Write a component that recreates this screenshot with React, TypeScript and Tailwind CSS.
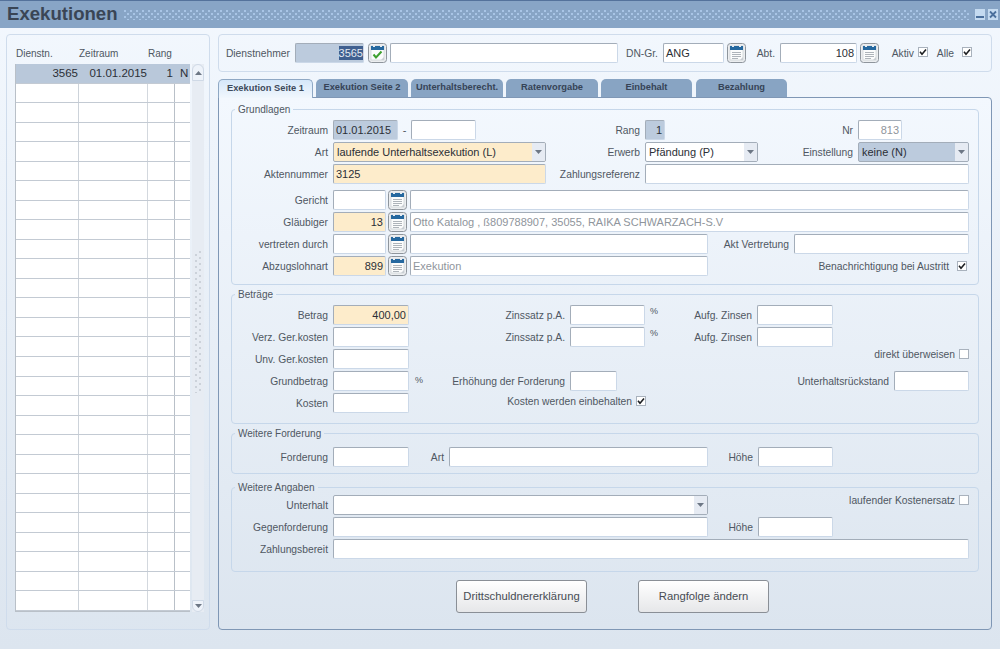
import React from 'react';

const LBL = 'shrink-0 text-right text-[10.3px] leading-none text-[#4f5762] whitespace-nowrap pt-[2px]';
const FIELD =
  'shrink-0 h-[20px] flex items-center border border-t-[#a3adb9] border-l-[#a3adb9] border-r-[#cbd8e8] border-b-[#cbd8e8] rounded-[2px] text-[11px] leading-none text-[#2b2f36] px-[2px] overflow-hidden whitespace-nowrap';
const SECTION = 'border border-[#c6d7ea] rounded-[4px] mx-0 px-0 min-w-0';
const LEGEND = 'ml-[3px] px-[3px] h-[14px] text-[10px] leading-[16px] text-[#4f5762]';

function Lbl({ className, children }: { className: string; children: React.ReactNode }) {
  return <span className={`${LBL} pr-[5px] ${className}`}>{children}</span>;
}

function Field({ className = '', children }: { className?: string; children?: React.ReactNode }) {
  return <div className={`${FIELD} ${className}`}>{children}</div>;
}

function Select({ className = '', children }: { className?: string; children?: React.ReactNode }) {
  return (
    <div className={`${FIELD} !pr-0 !border-[#a3adb9] ${className}`}>
      <span className="flex-1 pl-[1px]">{children}</span>
      <span className="w-[13px] h-full bg-[#e6ebf3] flex items-center justify-center">
        <svg width="7" height="4" viewBox="0 0 7 4">
          <path d="M0 0h7L3.5 4z" fill="#6d7785" />
        </svg>
      </span>
    </div>
  );
}

function Row({ className = '', children }: { className?: string; children: React.ReactNode }) {
  return <div className={`flex items-center h-[20px] ${className}`}>{children}</div>;
}

function Check({ checked = false, className = '' }: { checked?: boolean; className?: string }) {
  return (
    <svg width="10" height="10" viewBox="0 0 10 10" className={`shrink-0 ${className}`}>
      <rect x="0.5" y="0.5" width="9" height="9" fill="#fff" stroke="#a9b2bd" />
      {checked && <path d="M2 4.8 4 7.2 8 2.6" fill="none" stroke="#1d1f22" strokeWidth="1.6" />}
    </svg>
  );
}

function CalIcon({ ok = false, className = '' }: { ok?: boolean; className?: string }) {
  return (
    <svg width="19" height="20" viewBox="0 0 19 20" className={`shrink-0 ${className}`}>
      <rect x="0.5" y="0.5" width="18" height="19" rx="3" fill="#eceef0" stroke="#8e959c" />
      <rect x="3" y="3" width="13" height="14" fill="#fbfcfc" stroke="#c3c8cd" strokeWidth="0.6" />
      <rect x="3" y="3" width="13" height="4" fill="#25689f" />
      <rect x="5" y="2" width="2" height="2" fill="#e8edf2" />
      <rect x="12" y="2" width="2" height="2" fill="#e8edf2" />
      {ok ? (
        <path d="M5.5 11.5 8 14.5 13.5 8.5" fill="none" stroke="#3da02f" strokeWidth="2" />
      ) : (
        <path d="M5 9.5h9M5 11.5h9M5 13.5h9M5 15.5h6" stroke="#aeb4ba" strokeWidth="1" fill="none" />
      )}
      <path d="M13 17l3-3v3z" fill="#c9ced3" />
    </svg>
  );
}

function Dither() {
  return (
    <svg className="flex-1 h-[10px] min-w-0" aria-hidden="true">
      <defs>
        <pattern id="dots" width="6" height="6" patternUnits="userSpaceOnUse">
          <rect x="0" y="0" width="2" height="2" fill="#a9c5e6" />
          <rect x="3" y="3" width="2" height="2" fill="#a9c5e6" />
        </pattern>
      </defs>
      <rect width="100%" height="100%" fill="url(#dots)" />
    </svg>
  );
}

function ScrollGrip() {
  return (
    <svg width="8" height="142" className="mt-[170px]" aria-hidden="true">
      <defs>
        <pattern id="grip" width="8" height="6" patternUnits="userSpaceOnUse">
          <rect x="5" y="0" width="2" height="2" fill="#ccd2da" />
          <rect x="1" y="3" width="2" height="2" fill="#ccd2da" />
        </pattern>
      </defs>
      <rect width="8" height="142" fill="url(#grip)" />
    </svg>
  );
}

const tabs = [
  { label: 'Exekution Seite 2', cls: 'w-[92px] ml-[3px]' },
  { label: 'Unterhaltsberecht.', cls: 'w-[92px] ml-[3px]' },
  { label: 'Ratenvorgabe', cls: 'w-[92px] ml-[3px]' },
  { label: 'Einbehalt', cls: 'w-[91px] ml-[3px]' },
  { label: 'Bezahlung', cls: 'w-[91px] ml-[4px]' },
];

const emptyRows = Array.from({ length: 27 }, (_, i) => i);

export default function App() {
  return (
    <div className="w-[1000px] h-[649px] overflow-hidden flex flex-col font-['Liberation_Sans',Arial,sans-serif] bg-gradient-to-b from-[#f3f8fe] to-[#dce5ef]">
      {/* Title bar */}
      <div className="h-[28px] shrink-0 flex items-center bg-[#88a5c6] border-t border-t-[#54729b] pl-[7px] pr-[2px]">
        <h1 className="text-[18.6px] font-bold leading-none text-[#3a4555] mr-[6px]">Exekutionen</h1>
        <Dither />
        <div className="flex items-center gap-[3px] ml-[6px]">
          <svg width="10" height="11" viewBox="0 0 10 11">
            <rect width="10" height="11" fill="#c4daf0" />
            <rect x="1" y="7" width="8" height="2" fill="#4a6f9c" />
          </svg>
          <svg width="10" height="11" viewBox="0 0 10 11">
            <rect width="10" height="11" fill="#c4daf0" />
            <path d="M2 2.5l6 6M8 2.5l-6 6" stroke="#4a6f9c" strokeWidth="1.8" />
          </svg>
        </div>
      </div>

      <div className="flex-1 flex pt-[6px] pl-[6px] min-h-0">
        {/* Left list */}
        <aside className="w-[204px] h-[596px] shrink-0 border border-[#cfdcec] rounded-[4px] pl-[8px] flex flex-col">
          <div className="h-[29px] flex items-end pb-[5px] text-[10px] leading-none text-[#4f5762]">
            <span className="w-[64px] pl-[1px]">Dienstn.</span>
            <span className="w-[69px]">Zeitraum</span>
            <span>Rang</span>
          </div>
          <div className="flex h-[548px]">
            <div className="w-[175px] flex flex-col border-l border-b border-[#b9c0c8]">
              <div className="flex-1 flex bg-[#b9c8da] text-[11.5px] text-[#2b2f36] items-center border-b border-[#c3cad3]">
                <span className="w-[63px] text-right pr-[1px]">3565</span>
                <span className="w-[69px] text-right pr-[1px]">01.01.2015</span>
                <span className="w-[27px] text-right pr-[2px]">1</span>
                <span className="pl-[5px]">N</span>
              </div>
              {emptyRows.map((r) => (
                <div key={r} className="flex-1 flex bg-white border-b border-[#c3cad3]">
                  <span className="w-[63px] border-r border-[#cdd3da]" />
                  <span className="w-[69px] border-r border-[#d3d8de]" />
                  <span className="w-[27px] border-r border-[#b9c0c8]" />
                </div>
              ))}
            </div>
            <div className="w-[12px] ml-[2px] flex flex-col bg-[#e7ecf3]">
              <div className="h-[17px] rounded-t-full bg-[#eef3fa] border border-[#cfd9e6] flex items-center justify-center">
                <svg width="7" height="4" viewBox="0 0 7 4">
                  <path d="M0 4h7L3.5 0z" fill="#6d7785" />
                </svg>
              </div>
              <div className="flex-1 flex justify-center">
                <ScrollGrip />
              </div>
              <div className="h-[12px] rounded-b-full bg-[#eef3fa] border border-[#cfd9e6] flex items-center justify-center">
                <svg width="7" height="4" viewBox="0 0 7 4">
                  <path d="M0 0h7L3.5 4z" fill="#6d7785" />
                </svg>
              </div>
            </div>
          </div>
        </aside>

        <main className="w-[774px] ml-[8px] shrink-0 flex flex-col">
          {/* Top filter bar */}
          <div className="h-[38px] border border-[#cfdcec] rounded-[4px] flex items-center">
            <Lbl className="w-[76px]">Dienstnehmer</Lbl>
            <Field className="w-[69px] bg-[#bccbdd] justify-end !px-0">
              <span className="bg-[#3f5f8f] text-[#e3e9f1] h-[14px] leading-[14px]">3565</span>
            </Field>
            <CalIcon ok className="ml-[4px]" />
            <Field className="w-[228px] ml-[3px] bg-white" />
            <Lbl className="w-[45px]">DN-Gr.</Lbl>
            <Field className="w-[61px] bg-white">ANG</Field>
            <CalIcon className="ml-[3px]" />
            <Lbl className="w-[34px]">Abt.</Lbl>
            <Field className="w-[77px] bg-white justify-end">108</Field>
            <CalIcon className="ml-[3px]" />
            <span className={`${LBL} w-[39px] pr-[4px]`}>Aktiv</span>
            <Check checked className="mb-[3px]" />
            <span className={`${LBL} w-[34px] pr-[8px]`}>Alle</span>
            <Check checked className="mb-[3px]" />
          </div>

          {/* Tabs */}
          <div className="flex h-[19px] mt-[7px] relative z-10 -mb-px">
            <div className="w-[95px] h-[19px] rounded-t-[5px] border border-b-0 border-[#8fa8c4] bg-gradient-to-b from-[#d5e7f9] to-[#f1f7fd] flex items-center justify-center text-[9.3px] font-bold text-[#3d4a5c]">
              Exekution Seite 1
            </div>
            {tabs.map((t) => (
              <div
                key={t.label}
                className={`${t.cls} h-[18px] rounded-t-[5px] bg-[#88a4c3] flex items-center justify-center text-[9.3px] font-bold text-[#364356] whitespace-nowrap`}
              >
                {t.label}
              </div>
            ))}
          </div>

          {/* Tab content */}
          <div className="h-[533px] border border-[#7f97b5] rounded-[4px] rounded-tl-none px-[12px] pt-[4px] bg-gradient-to-b from-[#f3f8fe] to-[#dce5ef]">
            <fieldset className={`${SECTION} pb-[8px]`}>
              <legend className={LEGEND}>Grundlagen</legend>
              <Row className="mt-[4px]">
                <Lbl className="w-[101px]">Zeitraum</Lbl>
                <Field className="w-[65px] bg-[#bccbdd] border-transparent">01.01.2015</Field>
                <span className="w-[13px] text-center text-[11px] text-[#4f5762]">-</span>
                <Field className="w-[65px] bg-white" />
                <Lbl className="w-[169px]">Rang</Lbl>
                <Field className="w-[20px] bg-[#bccbdd] justify-end border-transparent">1</Field>
                <Lbl className="w-[193px]">Nr</Lbl>
                <Field className="w-[44px] bg-white justify-end text-[#8f959c]">813</Field>
              </Row>
              <Row className="mt-[2px]">
                <Lbl className="w-[101px]">Art</Lbl>
                <Select className="w-[213px] bg-[#fdeccb]">laufende Unterhaltsexekution (L)</Select>
                <Lbl className="w-[99px]">Erwerb</Lbl>
                <Select className="w-[113px] bg-white">Pfändung (P)</Select>
                <Lbl className="w-[100px]">Einstellung</Lbl>
                <Select className="w-[111px] bg-[#bccbdd]">keine (N)</Select>
              </Row>
              <Row className="mt-[2px]">
                <Lbl className="w-[101px]">Aktennummer</Lbl>
                <Field className="w-[213px] bg-[#fdeccb]">3125</Field>
                <Lbl className="w-[99px]">Zahlungsreferenz</Lbl>
                <Field className="w-[324px] bg-white" />
              </Row>
              <Row className="mt-[6px]">
                <Lbl className="w-[101px]">Gericht</Lbl>
                <Field className="w-[53px] bg-white" />
                <CalIcon className="ml-[2px]" />
                <Field className="w-[559px] ml-[3px] bg-white" />
              </Row>
              <Row className="mt-[2px]">
                <Lbl className="w-[101px]">Gläubiger</Lbl>
                <Field className="w-[53px] bg-[#fdeccb] justify-end">13</Field>
                <CalIcon className="ml-[2px]" />
                <Field className="w-[559px] ml-[3px] bg-white text-[#8f959c]">
                  Otto Katalog , ß809788907, 35055, RAIKA SCHWARZACH-S.V
                </Field>
              </Row>
              <Row className="mt-[2px]">
                <Lbl className="w-[101px]">vertreten durch</Lbl>
                <Field className="w-[53px] bg-white" />
                <CalIcon className="ml-[2px]" />
                <Field className="w-[298px] ml-[3px] bg-white" />
                <Lbl className="w-[86px]">Akt Vertretung</Lbl>
                <Field className="w-[175px] bg-white" />
              </Row>
              <Row className="mt-[2px]">
                <Lbl className="w-[101px]">Abzugslohnart</Lbl>
                <Field className="w-[53px] bg-[#fdeccb] justify-end">899</Field>
                <CalIcon className="ml-[2px]" />
                <Field className="w-[298px] ml-[3px] bg-white text-[#8f959c]">Exekution</Field>
                <span className={`${LBL} w-[249px] pr-[8px]`}>Benachrichtigung bei Austritt</span>
                <Check checked />
              </Row>
            </fieldset>

            <fieldset className={`${SECTION} mt-[2px] pb-[10px]`}>
              <legend className={LEGEND}>Beträge</legend>
              <Row className="mt-[4px]">
                <Lbl className="w-[101px]">Betrag</Lbl>
                <Field className="w-[76px] bg-[#fdeccb] justify-end">400,00</Field>
                <Lbl className="w-[161px]">Zinssatz p.A.</Lbl>
                <Field className="w-[75px] bg-white" />
                <span className="w-[8px] ml-[5px] mb-[6px] text-[9px] text-[#4f5762]">%</span>
                <Lbl className="w-[99px]">Aufg. Zinsen</Lbl>
                <Field className="w-[76px] bg-white" />
              </Row>
              <Row className="mt-[2px]">
                <Lbl className="w-[101px]">Verz. Ger.kosten</Lbl>
                <Field className="w-[76px] bg-white" />
                <Lbl className="w-[161px]">Zinssatz p.A.</Lbl>
                <Field className="w-[75px] bg-white" />
                <span className="w-[8px] ml-[5px] mb-[6px] text-[9px] text-[#4f5762]">%</span>
                <Lbl className="w-[99px]">Aufg. Zinsen</Lbl>
                <Field className="w-[76px] bg-white" />
              </Row>
              <Row className="mt-[2px]">
                <Lbl className="w-[101px]">Unv. Ger.kosten</Lbl>
                <Field className="w-[76px] bg-white" />
                <span className={`${LBL} w-[550px] pr-[4px] mb-[10px]`}>direkt überweisen</span>
                <Check className="mb-[10px]" />
              </Row>
              <Row className="mt-[2px]">
                <Lbl className="w-[101px]">Grundbetrag</Lbl>
                <Field className="w-[76px] bg-white" />
                <span className="w-[8px] ml-[6px] text-[9px] text-[#4f5762]">%</span>
                <Lbl className="w-[147px]">Erhöhung der Forderung</Lbl>
                <Field className="w-[47px] bg-white" />
                <Lbl className="w-[277px]">Unterhaltsrückstand</Lbl>
                <Field className="w-[75px] bg-white" />
              </Row>
              <Row className="mt-[2px]">
                <Lbl className="w-[101px]">Kosten</Lbl>
                <Field className="w-[76px] bg-white" />
                <span className={`${LBL} w-[227px] pr-[4px] mb-[4px]`}>Kosten werden einbehalten</span>
                <Check checked className="mb-[4px]" />
              </Row>
            </fieldset>

            <fieldset className={`${SECTION} mt-[2px] pb-[6px]`}>
              <legend className={LEGEND}>Weitere Forderung</legend>
              <Row className="mt-[7px]">
                <Lbl className="w-[101px]">Forderung</Lbl>
                <Field className="w-[76px] bg-white" />
                <Lbl className="w-[40px]">Art</Lbl>
                <Field className="w-[259px] bg-white" />
                <Lbl className="w-[50px]">Höhe</Lbl>
                <Field className="w-[75px] bg-white" />
              </Row>
            </fieldset>

            <fieldset className={`${SECTION} mt-[6px] pb-[12px]`}>
              <legend className={LEGEND}>Weitere Angaben</legend>
              <Row className="mt-[1px]">
                <Lbl className="w-[101px]">Unterhalt</Lbl>
                <Select className="w-[375px] bg-white" />
                <span className={`${LBL} w-[251px] pr-[4px] mb-[10px]`}>laufender Kostenersatz</span>
                <Check className="mb-[10px]" />
              </Row>
              <Row className="mt-[2px]">
                <Lbl className="w-[101px]">Gegenforderung</Lbl>
                <Field className="w-[375px] bg-white" />
                <Lbl className="w-[50px]">Höhe</Lbl>
                <Field className="w-[75px] bg-white" />
              </Row>
              <Row className="mt-[2px]">
                <Lbl className="w-[101px]">Zahlungsbereit</Lbl>
                <Field className="w-[636px] bg-white" />
              </Row>
            </fieldset>

            <div className="flex mt-[8px] ml-[225px]">
              <button className="w-[131px] h-[33px] rounded-[3px] border border-[#8a8f96] bg-gradient-to-b from-white to-[#e6e7e9] text-[11.25px] text-[#474c53]">
                Drittschuldnererklärung
              </button>
              <button className="w-[131px] h-[33px] ml-[51px] rounded-[3px] border border-[#8a8f96] bg-gradient-to-b from-white to-[#e6e7e9] text-[11.25px] text-[#474c53]">
                Rangfolge ändern
              </button>
            </div>
          </div>
        </main>
      </div>
    </div>
  );
}
